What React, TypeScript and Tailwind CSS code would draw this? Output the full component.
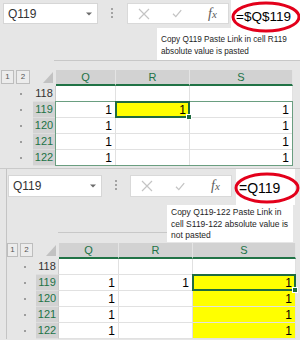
import React from 'react';

type Cell = { v?: string; yellow?: boolean; active?: boolean };
type Row = { n: number; sel: boolean; cells: Cell[] };

const topRows: Row[] = [
  { n: 118, sel: false, cells: [{}, {}, {}] },
  { n: 119, sel: true, cells: [{ v: '1' }, { v: '1', yellow: true, active: true }, { v: '1' }] },
  { n: 120, sel: true, cells: [{ v: '1' }, {}, { v: '1' }] },
  { n: 121, sel: true, cells: [{ v: '1' }, {}, { v: '1' }] },
  { n: 122, sel: true, cells: [{ v: '1' }, {}, { v: '1' }] },
];

const bottomRows: Row[] = [
  { n: 118, sel: false, cells: [{}, {}, {}] },
  { n: 119, sel: true, cells: [{ v: '1' }, { v: '1' }, { v: '1', yellow: true, active: true }] },
  { n: 120, sel: true, cells: [{ v: '1' }, {}, { v: '1', yellow: true }] },
  { n: 121, sel: true, cells: [{ v: '1' }, {}, { v: '1', yellow: true }] },
  { n: 122, sel: true, cells: [{ v: '1' }, {}, { v: '1', yellow: true }] },
];

// little grey arrow in the name box
const DropArrow = () => (
  <svg width="6" height="4" viewBox="0 0 6 4">
    <path d="M0 0.5h6L3 3.5z" fill="#6b6b6b" />
  </svg>
);

const Dots = ({ cls }: { cls: string }) => (
  <div className={`flex flex-col gap-[2px] ${cls}`}>
    <span className="block w-[2px] h-[2px] bg-[#a3a3a3]" />
    <span className="block w-[2px] h-[2px] bg-[#a3a3a3]" />
    <span className="block w-[2px] h-[2px] bg-[#a3a3a3]" />
  </div>
);

const FxBox = ({ cls }: { cls: string }) => (
  <div className={`bg-white border border-[#d9d9d9] flex items-center ${cls}`}>
    <svg className="ml-[10px]" width="12" height="12" viewBox="0 0 12 12">
      <path d="M1 1L11 11M11 1L1 11" stroke="#c4c4c4" strokeWidth="1.2" fill="none" />
    </svg>
    <svg className="ml-[22px]" width="10" height="9" viewBox="0 0 10 9">
      <path d="M1 4.8L3.8 7.6L9.2 1.2" stroke="#c4c4c4" strokeWidth="1.3" fill="none" />
    </svg>
    <span className="ml-[26px] font-['Liberation_Serif',serif] italic text-[14px] leading-none text-[#5c5c5c]">
      f<span className="text-[11px]">x</span>
    </span>
  </div>
);

const Corner = () => (
  <svg width="10" height="11" viewBox="0 0 10 11">
    <path d="M10 0V11H0Z" fill="#c2c2c2" />
  </svg>
);

const Ellipse = ({ cls, rx }: { cls: string; rx: number }) => (
  <svg className={`pointer-events-none absolute ${cls}`} width="70" height="33" viewBox="0 0 70 33">
    <ellipse cx="35" cy="16" rx={rx} ry="14" stroke="#e3001b" strokeWidth="3" fill="none" />
  </svg>
);

function Sheet({
  rows,
  cols,
  dotPad,
  btns,
  marquee,
}: {
  rows: Row[];
  cols: string;
  dotPad: string;
  btns: React.ReactNode;
  marquee?: boolean;
}) {
  return (
    <div className={`grid ${cols}`}>
      <div className="h-[16px] flex items-start">{btns}</div>
      <div className="h-[16px] flex items-start justify-end pr-[3px] pt-[2px]">
        <Corner />
      </div>
      {['Q', 'R', 'S'].map((c) => (
        <div
          key={c}
          className="h-[16px] bg-[#d2d2d2] border-r border-b-2 border-r-[#e4e4e4] border-b-[#217346] flex items-center justify-center text-[11px] text-[#217346]"
        >
          {c}
        </div>
      ))}
      <div className="h-[16px]" />

      {rows.map((r, i) => (
        <React.Fragment key={r.n}>
          <div className={`h-[16px] flex items-center justify-end ${dotPad}`}>
            <span className="block w-[2px] h-[2px] bg-[#9d9d9d]" />
          </div>
          <div
            className={`h-[16px] flex items-center justify-center text-[11px] border-r border-b border-r-[#c9c9c9] border-b-[#dedede] ${
              r.sel ? 'bg-[#d2d2d2] text-[#217346]' : 'bg-[#e6e6e6] text-[#333333]'
            }`}
          >
            {r.n}
          </div>
          {r.cells.map((c, j) => (
            <div
              key={j}
              className={`relative h-[16px] border-r border-b border-[#e1e1e1] flex items-center justify-end pr-[3px] text-[12px] text-black ${
                c.yellow ? 'bg-[#ffff00]' : 'bg-white'
              }`}
            >
              {c.v}
              {c.active && (
                <div className="pointer-events-none absolute -left-px -top-px -right-px -bottom-px border-2 border-[#1f6b40] z-20">
                  <div className="absolute -right-[4px] -bottom-[4px] w-[6px] h-[6px] bg-[#1f6b40] border border-white" />
                </div>
              )}
              {marquee && i === 1 && j === 0 && (
                <div className="pointer-events-none absolute -left-px -top-px w-[238px] h-[65px] border border-[#6a9e80] z-10" />
              )}
            </div>
          ))}
          <div className="h-[16px]" />
        </React.Fragment>
      ))}
    </div>
  );
}

const OutlineBtn = ({ label, cls }: { label: string; cls: string }) => (
  <div className={`h-[14px] border border-[#bdbdbd] bg-[#ececec] flex items-center justify-center text-[8px] text-[#555555] ${cls}`}>
    {label}
  </div>
);

export default function App() {
  return (
    <div className="w-[300px] h-[340px] overflow-hidden bg-[#e6e6e6] font-['Liberation_Sans',Arial,sans-serif]">
      {/* top screenshot */}
      <div className="relative h-[168px]">
        <div className="flex h-[28px] items-start">
          <div className="ml-[3px] mt-[3px] w-[95px] h-[21px] bg-white border border-[#d6d6d6] flex items-center justify-between pl-[4px] pr-[5px]">
            <span className="text-[12px] text-[#333333]">Q119</span>
            <DropArrow />
          </div>
          <Dots cls="ml-[13px] mt-[8px]" />
          <FxBox cls="ml-[14px] mt-[3px] w-[102px] h-[21px]" />
          <div className="ml-[2px] flex-1 h-[28px] bg-white pl-[5px] pt-[8px] text-[13.5px] leading-[18px] text-black">=$Q$119</div>
        </div>
        <div className="ml-[54px] border-b border-[#c8c8c8] flex justify-end">
          <div className="w-[143px] h-[32px] bg-white pl-[4px] pt-[6px] text-[8.2px] leading-[12px] text-[#1e1e1e]">
            <div>Copy Q119 Paste Link in cell R119</div>
            <div>absolute value is pasted</div>
          </div>
        </div>
        <div className="h-[9px]" />
        <Sheet
          rows={topRows}
          cols="grid-cols-[33px_23px_60px_74px_103px_1fr]"
          dotPad="pr-[11px]"
          marquee
          btns={
            <div className="flex gap-[2px] ml-[1px]">
              <OutlineBtn label="1" cls="w-[13px]" />
              <OutlineBtn label="2" cls="w-[14px]" />
            </div>
          }
        />
        <Ellipse cls="left-[231px] top-[1px]" rx={33} />
      </div>

      {/* bottom screenshot */}
      <div className="relative border-t border-[#cacaca] flex">
        <div className="w-[6px]" />
        <div className="flex-1 border-l border-[#c4c4c4]">
          <div className="flex h-[36px] items-start">
            <div className="ml-[1px] mt-[6px] w-[94px] h-[22px] bg-white border border-[#d6d6d6] flex items-center justify-between pl-[4px] pr-[5px]">
              <span className="text-[12px] text-[#333333]">Q119</span>
              <DropArrow />
            </div>
            <Dots cls="ml-[13px] mt-[11px]" />
            <FxBox cls="ml-[13px] mt-[6px] w-[102px] h-[22px]" />
            <div className="ml-[4px] w-[59px] h-[36px] bg-white pl-[3px] pt-[10px] text-[14px] leading-[18px] text-black">=Q119</div>
          </div>
          <div className="flex items-start">
            <div className="ml-[51px] w-[109px] h-[28px] border-b border-[#c8c8c8]" />
            <div className="w-[126px] h-[37px] bg-white pl-[4px] pt-[2px] text-[8.5px] leading-[11.5px] text-[#1e1e1e]">
              <div>Copy Q119-122 Paste Link in</div>
              <div>cell S119-122 absolute value is</div>
              <div>not pasted</div>
            </div>
          </div>
          <div className="h-[1px]" />
          <Sheet
            rows={bottomRows}
            cols="grid-cols-[29px_23px_60px_74px_103px_1fr]"
            dotPad="pr-[10px]"
            btns={
              <div className="flex gap-[2px]">
                <OutlineBtn label="1" cls="w-[11px]" />
                <OutlineBtn label="2" cls="w-[13px]" />
              </div>
            }
          />
        </div>
        <Ellipse cls="left-[232px] top-[3px]" rx={31} />
      </div>
    </div>
  );
}
